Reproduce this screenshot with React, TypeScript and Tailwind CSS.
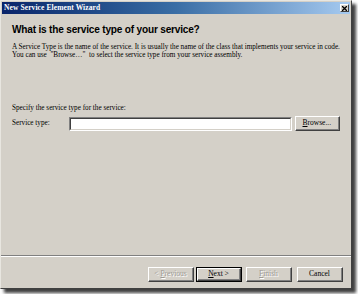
const serif = { fontFamily: '"Liberation Serif", "Times New Roman", serif' };

function WinButton({
  label,
  accel = "",
  before = "",
  after = "",
  disabled = false,
  isDefault = false,
  className = "",
}: {
  label: string;
  accel?: string;
  before?: string;
  after?: string;
  disabled?: boolean;
  isDefault?: boolean;
  className?: string;
}) {
  return (
    <div
      className={`${isDefault ? "border border-black" : ""} ${className}`}
    >
      <div className="h-full border-t border-l border-white border-r border-b border-r-[#404040] border-b-[#404040] bg-[#d4d0c8]">
        <div className="h-full flex items-center justify-center border-r border-b border-[#808080] text-[7.5px] leading-none">
          <span
            className={disabled ? "text-[#9c9a94] [text-shadow:1px_1px_0_#ffffff]" : "text-black"}
          >
            {before}
            <span className="underline">{accel}</span>
            {label}
            {after}
          </span>
        </div>
      </div>
    </div>
  );
}

export default function App() {
  return (
    <div className="w-[358px] h-[294px] bg-white overflow-hidden" style={serif}>
      <div className="w-[352px] h-[289px] flex flex-col bg-[#d4d0c8] border-t border-l border-[#e8e6e0] border-r border-b border-r-[#404040] border-b-[#404040] shadow-[4px_4px_3px_rgba(0,0,0,0.75)]">
        {/* title bar */}
        <div className="mx-[1px] mt-[1px] h-[12px] flex items-center justify-between pl-[2px] pr-[1px] bg-gradient-to-r from-[#0a246a] via-[#3a6ea5] to-[#a6caf0]">
          <span className="text-white font-bold text-[7.5px] leading-none tracking-[0.1px]">
            New Service Element Wizard
          </span>
          <div className="w-[9px] h-[8px] bg-[#d4d0c8] border-t border-l border-white border-r border-b border-r-[#404040] border-b-[#404040] flex items-center justify-center">
            <svg width="5" height="5" viewBox="0 0 5 5">
              <path d="M0 0 L5 5 M5 0 L0 5" stroke="black" strokeWidth="1.3" />
            </svg>
          </div>
        </div>

        {/* body */}
        <div className="flex-1 flex flex-col px-[11px]">
          <h1
            className="mt-[9px] text-[10.1px] leading-[13px] font-bold text-black tracking-[-0.2px]"
            style={{ fontFamily: '"Liberation Sans", Arial, sans-serif' }}
          >
            What is the service type of your service?
          </h1>
          <p className="mt-[7px] text-[7.2px] leading-[8px] text-black whitespace-nowrap">
            A Service Type is the name of the service. It is usually the name of the class that implements your service in code.
            <br />
            You can use &nbsp;"Browse…" &nbsp;to select the service type from your service assembly.
          </p>

          <div className="mt-[45px] text-[7.2px] leading-[8px] text-black">
            Specify the service type for the service:
          </div>
          <div className="mt-[4px] flex items-center h-[15px]">
            <span className="w-[58px] text-[7.2px] leading-none text-black">Service type:</span>
            <div className="w-[225px] h-[14px] border-t border-l border-[#808080] border-r border-b border-r-white border-b-white">
              <div className="h-full bg-white border-t border-l border-[#404040] border-r border-b border-r-[#d4d0c8] border-b-[#d4d0c8]" />
            </div>
            <WinButton
              label="rowse..."
              accel="B"
              className="ml-[3px] w-[46px] h-[15px]"
            />
          </div>
          <div className="flex-1" />
        </div>

        {/* separator */}
        <div className="h-[2px] border-t border-[#808080] border-b border-b-white" />

        {/* buttons */}
        <div className="h-[31px] flex items-start pt-[10px] pr-[8px] justify-end">
          <WinButton before="< " accel="P" label="revious" disabled className="w-[46px] h-[15px]" />
          <WinButton accel="N" label="ext" after=" >" isDefault className="ml-[2px] w-[46px] h-[15px]" />
          <WinButton accel="F" label="inish" disabled className="ml-[4px] w-[46px] h-[15px]" />
          <WinButton label="Cancel" className="ml-[5px] w-[46px] h-[15px]" />
        </div>
      </div>
    </div>
  );
}
